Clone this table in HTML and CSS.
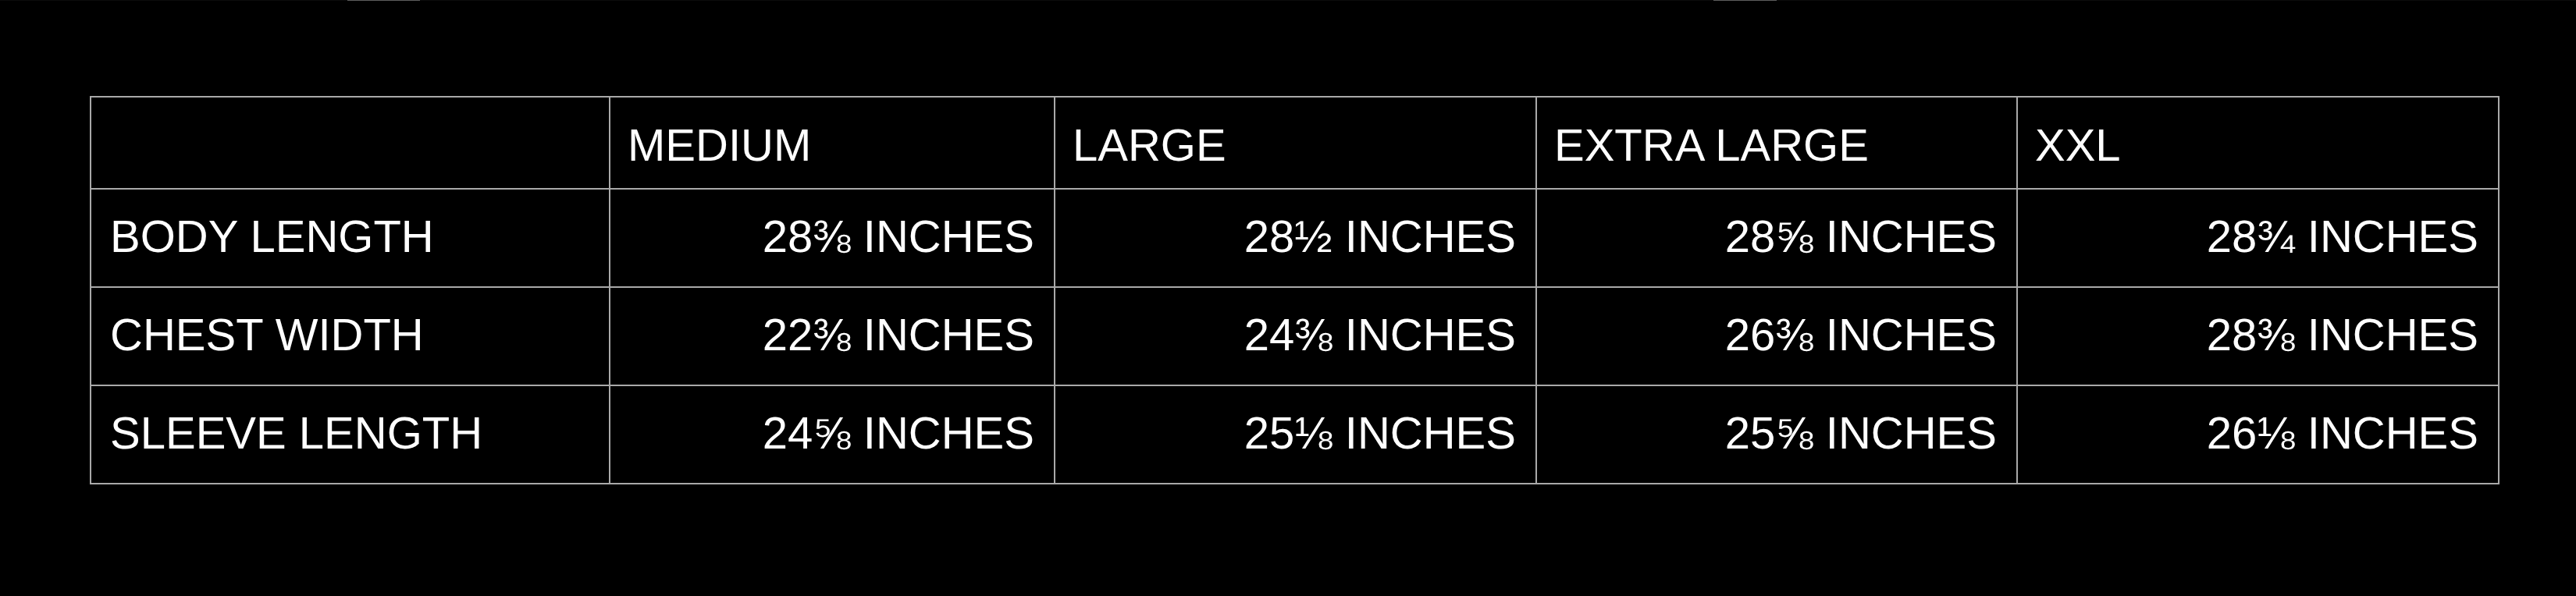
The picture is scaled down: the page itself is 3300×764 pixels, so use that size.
FILE: index.html
```html
<!DOCTYPE html>
<html lang="en">
<head>
<meta charset="utf-8">
<title>Size Chart</title>
<link rel="stylesheet" href="styles.css">
</head>
<body>
<div class="top-strip">
  <span class="seg seg-a"></span>
  <span class="seg seg-b"></span>
</div>
<table class="size-table">
  <thead>
    <tr>
      <th class="c1"></th>
      <th class="c2">MEDIUM</th>
      <th class="c3">LARGE</th>
      <th class="c4">EXTRA LARGE</th>
      <th class="c5">XXL</th>
    </tr>
  </thead>
  <tbody>
    <tr>
      <td class="label">BODY LENGTH</td>
      <td class="val">28⅜ INCHES</td>
      <td class="val">28½ INCHES</td>
      <td class="val">28⅝ INCHES</td>
      <td class="val">28¾ INCHES</td>
    </tr>
    <tr>
      <td class="label">CHEST WIDTH</td>
      <td class="val">22⅜ INCHES</td>
      <td class="val">24⅜ INCHES</td>
      <td class="val">26⅜ INCHES</td>
      <td class="val">28⅜ INCHES</td>
    </tr>
    <tr>
      <td class="label">SLEEVE LENGTH</td>
      <td class="val">24⅝ INCHES</td>
      <td class="val">25⅛ INCHES</td>
      <td class="val">25⅝ INCHES</td>
      <td class="val">26⅛ INCHES</td>
    </tr>
  </tbody>
</table>
</body>
</html>
```

FILE: styles.css
```css
html, body {
  margin: 0;
  padding: 0;
  background: #000;
}

body {
  width: 3300px;
  height: 764px;
  overflow: hidden;
  font-family: "Liberation Sans", Arial, Helvetica, sans-serif;
  color: #fff;
}

.top-strip {
  display: flex;
  height: 1px;
  background: #0b0b0b;
}

.seg {
  display: block;
  height: 1px;
  background: #5e5e5e;
}

.seg-a {
  margin-left: 445px;
  width: 93px;
}

.seg-b {
  margin-left: 1657px;
  width: 81px;
}

.size-table {
  margin: 122px 0 0 115px;
  table-layout: fixed;
  border-collapse: separate;
  border-spacing: 0;
  width: 3087px;
  border-left: 2px solid #a9a9a9;
  border-top: 2px solid #a9a9a9;
  font-size: 58px;
  line-height: 58px;
  font-weight: 400;
}

.size-table th,
.size-table td {
  box-sizing: border-box;
  border-right: 2px solid #a9a9a9;
  border-bottom: 2px solid #a9a9a9;
  vertical-align: middle;
  white-space: nowrap;
  font-weight: 400;
}

.size-table th {
  height: 118px;
  padding: 5px 22px 0;
  text-align: left;
}

.c1 { width: 665px; }
.c2 { width: 570px; }
.c3 { width: 617px; }
.c4 { width: 616px; }
.c5 { width: 617px; }

.size-table td {
  height: 126px;
  padding: 0 24px 4px;
}

.size-table td.label {
  text-align: left;
}

.size-table td.val {
  text-align: right;
  padding-right: 25px;
}
```
